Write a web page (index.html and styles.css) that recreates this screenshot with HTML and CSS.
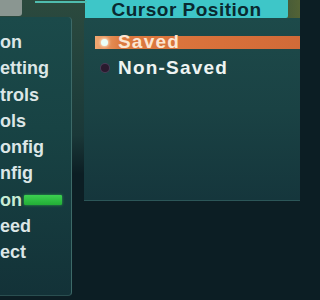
FILE: index.html
```html
<!DOCTYPE html>
<html>
<head>
<meta charset="utf-8">
<link rel="stylesheet" href="styles.css">
</head>
<body>
<div class="screen">
  <div class="left">
    <div class="top-strip">
      <div class="grey-tab"></div>
      <div class="thin-line"></div>
    </div>
    <div class="menu-panel">
      <div class="menu-item">on</div>
      <div class="menu-item">etting</div>
      <div class="menu-item">trols</div>
      <div class="menu-item">ols</div>
      <div class="menu-item">onfig</div>
      <div class="menu-item">nfig</div>
      <div class="menu-item active">on<span class="green-bar"></span></div>
      <div class="menu-item">eed</div>
      <div class="menu-item">ect</div>
    </div>
  </div>
  <div class="right">
    <div class="header">Cursor Position</div>
    <div class="option-panel">
      <div class="option selected"><span class="bullet on"></span><span class="label">Saved</span></div>
      <div class="option"><span class="bullet off"></span><span class="label">Non-Saved</span></div>
    </div>
  </div>
</div>
</body>
</html>
```
FILE: styles.css
```css
html, body {
  margin: 0;
  padding: 0;
  background: #0c1e24;
}
.screen {
  width: 300px;
  height: 300px;
  overflow: hidden;
  display: flex;
  font-family: "Liberation Sans", Arial, sans-serif;
  background:
    linear-gradient(to right, rgba(0,0,0,0) 85%, rgba(100,110,50,0.7) 100%) 0 0 / 100% 20px no-repeat,
    linear-gradient(to bottom, #2c4a3e 0, #21413c 25%, #1a3838 45%, #0c1e24 58%, #0c1e24 100%);
}
.left {
  width: 73px;
  flex: none;
  display: flex;
  flex-direction: column;
}
.top-strip {
  height: 17px;
  display: flex;
  position: relative;
}
.grey-tab {
  width: 22px;
  height: 16px;
  background: #8a9691;
  border-bottom-right-radius: 3px;
}
.thin-line {
  position: absolute;
  left: 35px;
  top: 1px;
  width: 52px;
  height: 2px;
  background: #4fbcae;
}
.menu-panel {
  margin-left: -6px;
  width: 78px;
  height: 279px;
  box-sizing: border-box;
  padding: 12px 0 0 6px;
  border-radius: 0 4px 4px 0;
  border-right: 1px solid #3d6a68;
  border-bottom: 1px solid #2a4e50;
  background: linear-gradient(to bottom, #1b4a4a 0, #184344 40%, #133238 100%);
}
.menu-item {
  height: 26.25px;
  line-height: 26.25px;
  font-size: 18px;
  font-weight: bold;
  color: #dce6e6;
  display: flex;
  align-items: center;
  white-space: nowrap;
}
.menu-item.active {
  color: #c8ecd4;
}
.green-bar {
  display: inline-block;
  width: 38px;
  height: 10px;
  margin-left: 2px;
  background: linear-gradient(to bottom, #3cd050, #22ae36);
  box-shadow: 0 0 3px rgba(60,210,80,0.7);
  border-radius: 1px;
}
.right {
  flex: 1;
  margin-left: 11px;
  margin-right: -6px;
  display: flex;
  flex-direction: column;
}
.header {
  height: 18px;
  margin-left: 1px;
  margin-right: 18px;
  background: #3ec6c8;
  color: #0a2a30;
  font-size: 19px;
  font-weight: bold;
  letter-spacing: 0.5px;
  line-height: 19px;
  text-align: center;
  border-bottom-right-radius: 2px;
}
.option-panel {
  height: 183px;
  box-sizing: border-box;
  padding-top: 11px;
  border-top-left-radius: 4px;
  border-bottom: 1px solid #2c5658;
  background: linear-gradient(to bottom, #1d4a4a 0, #1a4244 50%, #15363c 100%);
}
.option {
  height: 26px;
  margin-left: 11px;
  display: flex;
  align-items: center;
  font-size: 19px;
  font-weight: bold;
  letter-spacing: 1.2px;
  color: #eef4f2;
}
.option.selected {
  background-image: linear-gradient(to right, #f0a872 0, #dd7a40 12%, #d8703a 60%, #d06a38 100%);
  background-size: 100% 13px;
  background-position: 0 center;
  background-repeat: no-repeat;
  border-radius: 6px 0 0 6px;
  color: #fbe6d2;
}
.bullet {
  width: 7px;
  height: 7px;
  border-radius: 50%;
  margin-left: 6px;
  margin-right: 10px;
  flex: none;
}
.bullet.on {
  background: #eafff8;
  box-shadow: 0 0 3px 1px rgba(255,240,220,0.8);
}
.bullet.off {
  width: 8px;
  height: 8px;
  margin-right: 9px;
  background: #2a1a2e;
  box-shadow: 0 0 0 1px #4a3a56;
}
```
